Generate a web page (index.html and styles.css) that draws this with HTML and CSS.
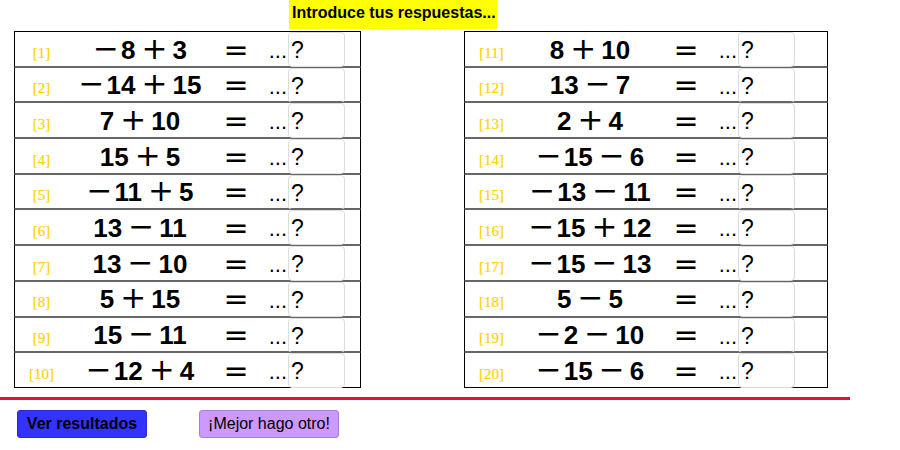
FILE: index.html
```html
<!DOCTYPE html>
<html>
<head>
<meta charset="utf-8">
<link rel="stylesheet" href="styles.css">
</head>
<body>
<div class="top">
  <div class="banner">Introduce tus respuestas...</div>
</div>
<div class="tables">
  <div class="table left">
    <div class="row"><span class="lab">[1]</span><span class="expr"><span class="neg">−</span>8<span class="op">+</span>3</span><span class="eq">=</span><span class="dots">...</span><span class="inp">?</span></div>
    <div class="row"><span class="lab">[2]</span><span class="expr"><span class="neg">−</span>14<span class="op">+</span>15</span><span class="eq">=</span><span class="dots">...</span><span class="inp">?</span></div>
    <div class="row"><span class="lab">[3]</span><span class="expr">7<span class="op">+</span>10</span><span class="eq">=</span><span class="dots">...</span><span class="inp">?</span></div>
    <div class="row"><span class="lab">[4]</span><span class="expr">15<span class="op">+</span>5</span><span class="eq">=</span><span class="dots">...</span><span class="inp">?</span></div>
    <div class="row"><span class="lab">[5]</span><span class="expr"><span class="neg">−</span>11<span class="op">+</span>5</span><span class="eq">=</span><span class="dots">...</span><span class="inp">?</span></div>
    <div class="row"><span class="lab">[6]</span><span class="expr">13<span class="op">−</span>11</span><span class="eq">=</span><span class="dots">...</span><span class="inp">?</span></div>
    <div class="row"><span class="lab">[7]</span><span class="expr">13<span class="op">−</span>10</span><span class="eq">=</span><span class="dots">...</span><span class="inp">?</span></div>
    <div class="row"><span class="lab">[8]</span><span class="expr">5<span class="op">+</span>15</span><span class="eq">=</span><span class="dots">...</span><span class="inp">?</span></div>
    <div class="row"><span class="lab">[9]</span><span class="expr">15<span class="op">−</span>11</span><span class="eq">=</span><span class="dots">...</span><span class="inp">?</span></div>
    <div class="row"><span class="lab">[10]</span><span class="expr"><span class="neg">−</span>12<span class="op">+</span>4</span><span class="eq">=</span><span class="dots">...</span><span class="inp">?</span></div>
  </div>
  <div class="table right">
    <div class="row"><span class="lab">[11]</span><span class="expr">8<span class="op">+</span>10</span><span class="eq">=</span><span class="dots">...</span><span class="inp">?</span></div>
    <div class="row"><span class="lab">[12]</span><span class="expr">13<span class="op">−</span>7</span><span class="eq">=</span><span class="dots">...</span><span class="inp">?</span></div>
    <div class="row"><span class="lab">[13]</span><span class="expr">2<span class="op">+</span>4</span><span class="eq">=</span><span class="dots">...</span><span class="inp">?</span></div>
    <div class="row"><span class="lab">[14]</span><span class="expr"><span class="neg">−</span>15<span class="op">−</span>6</span><span class="eq">=</span><span class="dots">...</span><span class="inp">?</span></div>
    <div class="row"><span class="lab">[15]</span><span class="expr"><span class="neg">−</span>13<span class="op">−</span>11</span><span class="eq">=</span><span class="dots">...</span><span class="inp">?</span></div>
    <div class="row"><span class="lab">[16]</span><span class="expr"><span class="neg">−</span>15<span class="op">+</span>12</span><span class="eq">=</span><span class="dots">...</span><span class="inp">?</span></div>
    <div class="row"><span class="lab">[17]</span><span class="expr"><span class="neg">−</span>15<span class="op">−</span>13</span><span class="eq">=</span><span class="dots">...</span><span class="inp">?</span></div>
    <div class="row"><span class="lab">[18]</span><span class="expr">5<span class="op">−</span>5</span><span class="eq">=</span><span class="dots">...</span><span class="inp">?</span></div>
    <div class="row"><span class="lab">[19]</span><span class="expr"><span class="neg">−</span>2<span class="op">−</span>10</span><span class="eq">=</span><span class="dots">...</span><span class="inp">?</span></div>
    <div class="row"><span class="lab">[20]</span><span class="expr"><span class="neg">−</span>15<span class="op">−</span>6</span><span class="eq">=</span><span class="dots">...</span><span class="inp">?</span></div>
  </div>
</div>
<div class="rule"></div>
<div class="buttons">
  <button class="btn ver">Ver resultados</button>
  <button class="btn otro">¡Mejor hago otro!</button>
</div>
</body>
</html>
```
FILE: styles.css
```css
html, body {
  margin: 0;
  padding: 0;
  background: #fff;
}
body {
  width: 900px;
  height: 450px;
  overflow: hidden;
  font-family: "Liberation Sans", Arial, sans-serif;
  color: #000;
}
.top {
  height: 31px;
  padding-left: 289px;
}
.banner {
  display: inline-block;
  box-sizing: border-box;
  width: 208px;
  height: 29px;
  background: #ffff00;
  font-weight: bold;
  font-size: 16px;
  line-height: 26px;
  padding-left: 3px;
  white-space: nowrap;
}
.tables {
  display: flex;
  padding-left: 14px;
  gap: 103px;
}
.table {
  display: flex;
  flex-direction: column;
}
.left { width: 347px; }
.right { width: 364px; }
.row {
  box-sizing: border-box;
  height: 35.7px;
  border: 1px solid #000;
  border-top-color: #666;
  border-bottom-color: #666;
  display: grid;
  grid-template-columns: 53px 144px 48px 28px 57px 1fr;
  align-items: center;
}
.row:first-child { border-top-color: #000; }
.row:last-child { border-bottom-color: #000; }
.lab {
  text-align: center;
  font-family: "Liberation Serif", "Times New Roman", serif;
  font-size: 15px;
  color: #ffd200;
  padding-top: 7px;
  -webkit-text-stroke: 0.2px #ffd200;
}
.expr {
  text-align: center;
  font-weight: bold;
  font-size: 26px;
  line-height: 30px;
  white-space: nowrap;
}
.op, .neg {
  font-family: "DejaVu Sans", sans-serif;
  font-weight: normal;
  font-size: 31px;
  line-height: 20px;
}
.op { margin: 0 5px 0 6px; }
.neg { margin-right: 2px; }
.eq {
  text-align: center;
  font-family: "DejaVu Sans", sans-serif;
  font-size: 30px;
  line-height: 30px;
}
.dots {
  text-align: right;
  font-size: 22px;
  line-height: 24px;
  padding-top: 3px;
  padding-right: 1px;
}
.inp {
  box-sizing: border-box;
  align-self: stretch;
  border: 1px solid #dcdcdc;
  border-radius: 4px;
  font-size: 23px;
  line-height: 32px;
  padding-left: 2px;
  padding-top: 1px;
}
.rule {
  margin-top: 9px;
  width: 850px;
  height: 3px;
  background: #dc143c;
}
.buttons {
  display: flex;
  padding-left: 17px;
  padding-top: 10px;
  gap: 52px;
}
.btn {
  box-sizing: border-box;
  height: 28px;
  border-radius: 3px;
  font-family: "Liberation Sans", Arial, sans-serif;
  font-size: 16px;
  color: #000;
  padding: 0;
  margin: 0;
}
.ver {
  width: 130px;
  background: #3333ff;
  border: 1px solid #2a2ad0;
  font-weight: bold;
}
.otro {
  width: 140px;
  background: #cc99ff;
  border: 1px solid #a77fd6;
}
```
